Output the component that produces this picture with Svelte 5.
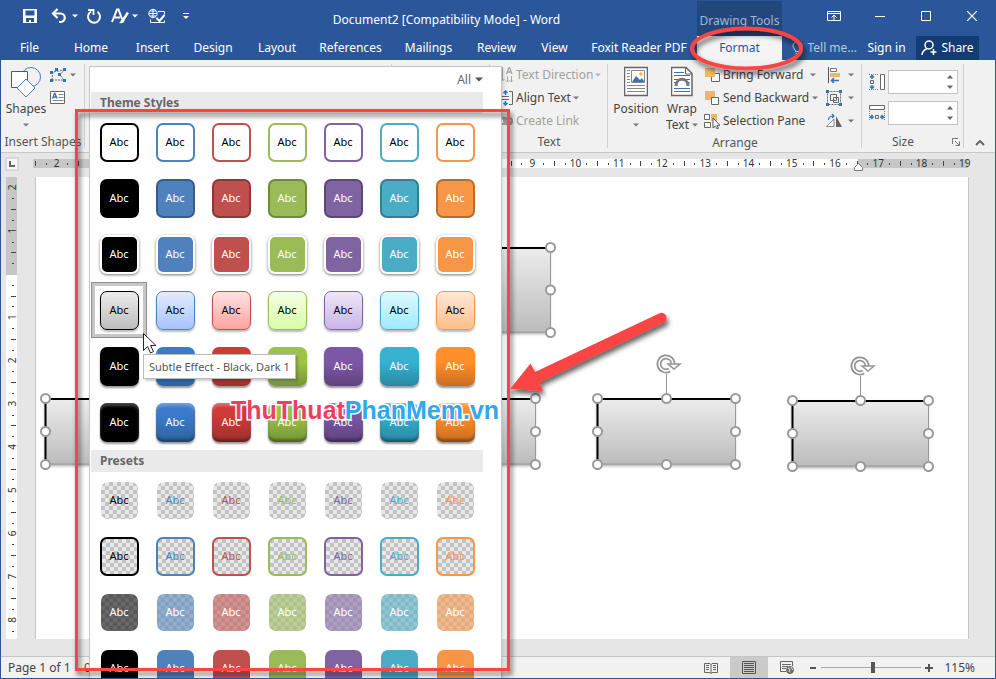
<script>
  const tabs = ['File', 'Home', 'Insert', 'Design', 'Layout', 'References', 'Mailings', 'Review', 'View', 'Foxit Reader PDF'];

  const accents = [
    { name: 'Black, Dark 1', c: '#000000', dark: '#000000', lo: '#bdbdbd', hi: '#ececec', g1: '#000000', g2: '#000000' },
    { name: 'Blue, Accent 1', c: '#4f81bd', dark: '#385d8a', lo: '#a6c4ff', hi: '#e2ecff', g1: '#3a7ccb', g2: '#2f629f' },
    { name: 'Red, Accent 2', c: '#c0504d', dark: '#8c3836', lo: '#ffa3a1', hi: '#ffe2e1', g1: '#cf3b38', g2: '#9e302d' },
    { name: 'Olive Green, Accent 3', c: '#9bbb59', dark: '#71893f', lo: '#d9fda6', hi: '#f4ffe2', g1: '#9bc348', g2: '#769535' },
    { name: 'Purple, Accent 4', c: '#8064a2', dark: '#5c4776', lo: '#c9b5e8', hi: '#efe6fb', g1: '#7d57a7', g2: '#5e437f' },
    { name: 'Aqua, Accent 5', c: '#4bacc6', dark: '#357d91', lo: '#9eeaff', hi: '#e0f9ff', g1: '#36b1d2', g2: '#2a87a1' },
    { name: 'Orange, Accent 6', c: '#f79646', dark: '#b66d31', lo: '#ffbe8a', hi: '#ffe8d8', g1: '#ff8f2b', g2: '#cb6d1e' }
  ];

  const sections = [
    { title: 'Theme Styles', rows: [
      { kind: 'outline', label: 'Colored Outline' },
      { kind: 'fill', label: 'Colored Fill' },
      { kind: 'light', label: 'Light Outline' },
      { kind: 'subtle', label: 'Subtle Effect' },
      { kind: 'moderate', label: 'Moderate Effect' },
      { kind: 'intense', label: 'Intense Effect' }
    ] },
    { title: 'Presets', rows: [
      { kind: 'clear', label: 'Transparent' },
      { kind: 'clear ring', label: 'Transparent, Colored Outline' },
      { kind: 'semi', label: 'Semitransparent' },
      { kind: 'solid', label: 'Colored Fill, No Outline' }
    ] }
  ];

  const unit = 43.25;
  const quarters = (from, to) => {
    const marks = [];
    for (let q = from * 4; q <= to * 4; q++) {
      if (q === 0) continue;
      const type = q % 4 === 0 ? 'number' : q % 2 === 0 ? 'tick' : 'dot';
      marks.push({ type, at: (q / 4) * unit, n: Math.abs(q / 4) });
    }
    return marks;
  };
  const across = quarters(-2.5, 19);
  const down = quarters(-2, 8.25);

  const shapes = [
    { x: 315, y: 70, w: 200, h: 85 },
    { x: 10, y: 221, w: 138, h: 66 },
    { x: 362, y: 221, w: 138, h: 66 },
    { x: 562, y: 221, w: 138, h: 66 },
    { x: 757, y: 223, w: 136, h: 66 }
  ];
  const handles = (s) => [
    [0, 0], [0.5, 0], [1, 0], [0, 0.5], [1, 0.5], [0, 1], [0.5, 1], [1, 1]
  ].map(([a, b]) => [s.x + a * s.w, s.y + b * s.h]);
</script>

{#snippet caret()}
  <svg class="caret" width="6" height="4" viewBox="0 0 6 4" aria-hidden="true"><path d="M0 0.5h6L3 3.5z" fill="currentColor" /></svg>
{/snippet}

<div class="app">
  <header>
    <div class="titlebar">
      <div class="quick">
        <button aria-label="Save"><svg width="16" height="16" viewBox="0 0 16 16"><path d="M1 1h14v14H1z" fill="#fff" /><path d="M3.500 2.500h9v5h-9zM4 10h8v4H9v-2H7v2H4z" fill="#2b579a" /></svg></button>
        <button aria-label="Undo"><svg width="16" height="16" viewBox="0 0 16 16"><path d="M2 5.500h7.500a4 4 0 0 1 0 8.500H8" fill="none" stroke="#fff" stroke-width="2.200" /><path d="M6.500 1 2 5.500 6.500 10" fill="none" stroke="#fff" stroke-width="2.200" /></svg></button>
        <button aria-label="Undo history">{@render caret()}</button>
        <button aria-label="Repeat"><svg width="16" height="16" viewBox="0 0 16 16"><path d="M5 3.500A6 6 0 1 0 11.500 3.800" fill="none" stroke="#fff" stroke-width="2" /><path d="M2 2h5.500v5" fill="none" stroke="#fff" stroke-width="1.800" /></svg></button>
        <button aria-label="Text effects"><svg width="18" height="16" viewBox="0 0 18 16"><path d="M1 14 6 1.500h1.500L11 11M3 9.500h6" fill="none" stroke="#fff" stroke-width="2" /><path d="M17 4.500 12 12" stroke="#fff" stroke-width="2.500" /><path d="M12.500 10.500c-3 0-2 3-4.500 4.500 3 1 6-.5 5.500-3.500z" fill="#fff" /></svg></button>
        <button aria-label="Text effects menu">{@render caret()}</button>
        <button aria-label="Spelling and language"><svg width="18" height="16" viewBox="0 0 18 16" fill="none" stroke="#fff"><circle cx="5" cy="5.500" r="4.200" /><path d="M5 1v9M1 5.500h8M2 3h6M2 8h6M10 3.500h6.500v3M2.500 11.500v3h14v-2" /><path d="m8.500 10 3 3L16.500 7" stroke-width="2" /></svg></button>
        <button aria-label="Customize Quick Access Toolbar"><svg width="8" height="8" viewBox="0 0 8 8"><path d="M1 1.500h6" stroke="#fff" /><path d="M1 4h6L4 7z" fill="#fff" /></svg></button>
      </div>
      <h1>Document2 [Compatibility Mode] - Word</h1>
      <div class="context">Drawing Tools</div>
      <div class="window">
        <button aria-label="Ribbon display options"><svg width="14" height="12" viewBox="0 0 14 12" fill="none" stroke="#fff"><path d="M.5 1.500h13v9H.5zM.5 3.500h13M7 10V5M4.500 7.500 7 5l2.500 2.500" /></svg></button>
        <button aria-label="Minimize"><svg width="10" height="10" viewBox="0 0 10 10"><path d="M0 5.500h10" stroke="#fff" /></svg></button>
        <button aria-label="Maximize"><svg width="10" height="10" viewBox="0 0 10 10"><path d="M.5.5h9v9h-9z" fill="none" stroke="#fff" /></svg></button>
        <button aria-label="Close"><svg width="10" height="10" viewBox="0 0 10 10"><path d="m0 0 10 10M10 0 0 10" stroke="#fff" stroke-width="1.200" /></svg></button>
      </div>
    </div>
    <nav class="tabs">
      {#each tabs as tab}<button>{tab}</button>{/each}
      <button class="active">Format</button>
      <button class="tell"><svg width="11" height="15" viewBox="0 0 11 15" fill="none" stroke="#c9d5e8"><path d="M3.500 10.500C3.500 8.500 1 7.500 1 5a4.500 4.500 0 0 1 9 0c0 2.500-2.500 3.500-2.500 5.500zM3.500 12.500h4M4 14.500h3" /></svg>Tell me...</button>
      <button class="sign">Sign in</button>
      <button class="share"><svg width="16" height="16" viewBox="0 0 16 16" fill="none" stroke="#fff" stroke-width="1.500"><circle cx="8" cy="5" r="4" /><path d="M1 15c0-3 2-5 5-6.500M12.500 9v6M9.500 12h6" /></svg>Share</button>
    </nav>
  </header>

  <section class="ribbon">
    <div class="group shapes-group">
      <div class="body">
        <button class="big"><svg width="32" height="32" viewBox="0 0 32 32" fill="#fff" stroke="#4a7ebb"><circle cx="21" cy="11" r="9.500" fill="#f1f1f1" /><path d="M1.500 5.500h16v16h-16z" stroke="#2f6099" /><path d="m16 13 9 9-9 9-9-9z" /></svg><span>Shapes</span>{@render caret()}</button>
        <div class="stack narrow">
          <button aria-label="Edit shape"><svg width="16" height="14" viewBox="0 0 16 14"><path d="M2 12 3 4l11-2-4 5 4 5z" fill="none" stroke="#666" stroke-dasharray="2 1" /><path d="M0 3h3v3H0zM5 0h3v3H5zM13 0h3v3h-3zM0 11h3v3H0zM8 5h3v3H8zM13 11h3v3h-3z" fill="#2f75b5" /></svg>{@render caret()}</button>
          <button aria-label="Draw text box"><svg width="16" height="14" viewBox="0 0 16 14"><path d="M.5.5h14v12H.5z" fill="#fff" stroke="#666" /><path d="m2.500 7.500 2-5h.500l2 5M3.500 6h3" fill="none" stroke="#2f75b5" stroke-width="1.300" /><path d="M8.500 3.500h5M8.500 6.500h5M2.500 9.500h11" stroke="#888" /></svg></button>
        </div>
      </div>
      <div class="label">Insert Shapes</div>
    </div>
    <div class="group styles-group"></div>
    <div class="group art-group"></div>
    <div class="group text-group">
      <div class="body stack">
        <button disabled><svg width="16" height="16" viewBox="0 0 16 16" fill="none" stroke="#a6a6a6"><path d="M4.500 0v14M2.500 12l2 2 2-2M9.500 9v6M8 13.500l1.500 1.500 1.500-1.500M13.500 9v6M12 13.500l1.500 1.500 1.500-1.500" /><path d="m8.500 7 2.500-6.500h.500L14 7M9.500 5h4" stroke-width="1.300" /></svg>Text Direction{@render caret()}</button>
        <button><svg width="16" height="16" viewBox="0 0 16 16" fill="none" stroke="#666"><path d="M11 1.500h3.500v13H11M4 6.500h7M4 9.500h7" /><path d="M7.500 5V1M5.500 3l2-2 2 2M7.500 11v4M5.500 13l2 2 2-2" stroke="#2f75b5" stroke-width="1.500" /></svg>Align Text{@render caret()}</button>
        <button disabled><svg width="16" height="16" viewBox="0 0 16 16" fill="none" stroke="#9c9c9c" stroke-width="2"><rect x="1" y="5" width="8" height="6" rx="3" /><rect x="6" y="5" width="8" height="6" rx="3" /><path d="m3 4 9 8M5 4l9 7" /></svg>Create Link</button>
      </div>
      <div class="label">Text</div>
    </div>
    <div class="group arrange-group">
      <div class="body">
        <button class="big position"><svg width="24" height="30" viewBox="0 0 24 30"><path d="M.5.5h23v28H.5z" fill="#fff" stroke="#666" stroke-width="1.500" /><path d="M3 3.500h3M3 6.500h3M3 9.500h3M3 12.500h3M3 15.500h3M3 18.500h18M3 21.500h18M3 24.500h18" stroke="#888" /><path d="M7.500 3.500h13v12h-13z" fill="#fff" stroke="#888" /><path d="m8 15 4-6 4 4 2-2 2.500 4z" fill="#3b73af" /><circle cx="17" cy="7" r="1.800" fill="#e9b85f" /></svg><span>Position</span>{@render caret()}</button>
        <button class="big wrap"><svg width="22" height="30" viewBox="0 0 22 30"><path d="M.5.5H15l6 6v22H.5z" fill="#fff" stroke="#666" stroke-width="1.500" /><path d="M14.500 1v6H21" fill="none" stroke="#666" /><path d="M3 5.500h10M3 8.500h16M3 12.500h4M15 12.500h4M3 15.500h2M17 15.500h2M3 21.500h16M3 24.500h16" stroke="#3b73af" /><path d="M5 19c0-9 12-9 12 0" fill="none" stroke="#777" stroke-width="3" /></svg><span>Wrap</span><span class="line">Text {@render caret()}</span></button>
        <div class="stack order">
          <button><svg width="16" height="16" viewBox="0 0 16 16"><path d="M7.500 6.500h8v8h-8z" fill="#fff" stroke="#666" /><path d="M1 1h10v9H1z" fill="#edb768" /></svg><span>Bring Forward</span>{@render caret()}</button>
          <button><svg width="16" height="16" viewBox="0 0 16 16"><path d="M1 1h10v9H1z" fill="#edb768" /><path d="M7.500 7.500h7v7h-7z" fill="#fff" stroke="#666" /></svg><span>Send Backward</span>{@render caret()}</button>
          <button><svg width="16" height="16" viewBox="0 0 16 16"><path d="M7 1h6v7H7z" fill="#edb768" /><path d="M.5 1.500h5v5h-5zM.5 9.500h6v5h-6z" fill="#fff" stroke="#666" /><path d="M9 5v10l2.500-2 1.500 3 1.500-.7-1.500-3h3z" fill="#fff" stroke="#555" /></svg><span>Selection Pane</span></button>
        </div>
        <div class="stack tools">
          <button aria-label="Align"><svg width="16" height="16" viewBox="0 0 16 16"><path d="M2.500 0v16" stroke="#555" /><path d="M4.500 1.500h6v3h-6z" fill="#fff" stroke="#777" /><path d="M4 6h10v4H4z" fill="#edb768" /><path d="M13 13.500H5M8 11l-2.500 2.500L8 16" fill="none" stroke="#2f75b5" stroke-width="1.500" /></svg>{@render caret()}</button>
          <button aria-label="Group"><svg width="16" height="16" viewBox="0 0 16 16" fill="none" stroke="#666"><path d="M1.500 1.500h13v13h-13z" stroke-dasharray="2 1" /><path d="M4.500 4.500h6v6h-6zM7.500 7.500h5v5h-5z" /><path d="M0 0h3v3H0zM13 0h3v3h-3zM0 13h3v3H0zM13 13h3v3h-3z" fill="#2f75b5" stroke="none" /></svg>{@render caret()}</button>
          <button aria-label="Rotate"><svg width="16" height="16" viewBox="0 0 16 16"><path d="M.5 13.500H8V6z" fill="#fff" stroke="#888" /><path d="M10 3v11h6z" fill="#666" /><path d="M2.500 7c0-3 2-4 5-4M6 1l2 2-2 2" fill="none" stroke="#2f75b5" stroke-width="1.200" /></svg>{@render caret()}</button>
        </div>
      </div>
      <div class="label">Arrange</div>
    </div>
    <div class="group size-group">
      <div class="body sizes">
        <label><svg width="18" height="18" viewBox="0 0 18 18"><path d="M1 1.500h10M1 16.500h10" stroke="#777" stroke-dasharray="1 1" /><path d="M12.500 1.500h4v15h-4z" fill="#fff" stroke="#666" /><path d="M4 6V2M2 4.500l2-2 2 2M4 12v4M2 13.500l2 2 2-2" fill="none" stroke="#2f75b5" stroke-width="1.500" /><path d="M2.500 7.500h3v3h-3z" fill="none" stroke="#666" /></svg><input type="text" aria-label="Shape height" /><svg class="spin" width="6" height="14" viewBox="0 0 6 14"><path d="M0 3.500h6L3 0zM0 10.500h6L3 14z" fill="#666" /></svg></label>
        <label><svg width="18" height="18" viewBox="0 0 18 18"><path d="M1.500 1.500h15v4h-15z" fill="#fff" stroke="#666" /><path d="M1.500 7v10M16.500 7v10" stroke="#777" stroke-dasharray="1 1" /><path d="M6 13H2M4.500 11l-2 2 2 2M12 13h4M13.500 11l2 2-2 2" fill="none" stroke="#2f75b5" stroke-width="1.500" /><path d="M7.500 11.500h3v3h-3z" fill="none" stroke="#666" /></svg><input type="text" aria-label="Shape width" /><svg class="spin" width="6" height="14" viewBox="0 0 6 14"><path d="M0 3.500h6L3 0zM0 10.500h6L3 14z" fill="#666" /></svg></label>
      </div>
      <div class="label launch"><span>Size</span><button aria-label="Size settings"><svg width="8" height="8" viewBox="0 0 8 8" fill="none" stroke="#777"><path d="M.5 6V.5H6M3 3l4 4M7.500 3.500v4h-4" /></svg></button></div>
    </div>
    <button class="collapse" aria-label="Collapse the ribbon"><svg width="10" height="6" viewBox="0 0 10 6"><path d="m1 5 4-4 4 4" fill="none" stroke="#666" stroke-width="2" /></svg></button>
  </section>

  <div class="ruler-row">
    <button class="tabstop" aria-label="Tab selector"><svg width="6" height="6" viewBox="0 0 6 6"><path d="M1 0v5h5" fill="none" stroke="#666" stroke-width="2" /></svg></button>
    <svg class="hruler" width="940" height="24" viewBox="33 153 940 24">
      <path d="M33 159h935v9H33z" fill="#c6c6c6" /><path d="M143 159h715v9H143z" fill="#fff" />
      {#each across as m}
        {#if m.type === 'number'}<text x={143 + m.at} y="167" text-anchor="middle">{m.n}</text>
        {:else if m.type === 'tick'}<path d="M{Math.round(143 + m.at)} 161h1v5h-1z" fill="#444" />
        {:else}<path d="M{Math.round(143 + m.at)} 163h1v2h-1z" fill="#444" />{/if}
      {/each}
      <path d="M854.500 170.500v-3l4-4 4 4v3z" fill="#fff" stroke="#777" />
    </svg>
  </div>

  <main>
    <svg class="vruler" width="11" height="462" viewBox="6 177 11 462">
      <path d="M6 177h11v462H6z" fill="#fff" /><path d="M6 177h11v98H6z" fill="#c6c6c6" />
      {#each down as m}
        {#if m.type === 'number'}<text transform="translate(16 {274 + m.at}) rotate(-90)" text-anchor="middle">{m.n}</text>
        {:else if m.type === 'tick'}<path d="M11 {Math.round(274 + m.at)}h5v1h-5z" fill="#444" />
        {:else}<path d="M12 {Math.round(274 + m.at)}h2v1h-2z" fill="#444" />{/if}
      {/each}
    </svg>
    <div class="page">
      <svg class="canvas" width="932" height="462" viewBox="1 0 932 462" role="img" aria-label="Selected drawing shapes">
        <defs>
          <linearGradient id="body" x2="0" y2="1"><stop offset="0" stop-color="#ededed" /><stop offset="1" stop-color="#bcbcbc" /></linearGradient>
          <filter id="soft" x="-10%" y="-10%" width="120%" height="130%"><feDropShadow dx="0" dy="2" stdDeviation="1.500" flood-opacity=".35" /></filter>
        </defs>
        {#each shapes as s}
          <rect x={s.x} y={s.y} width={s.w} height={s.h} fill="url(#body)" filter="url(#soft)" />
          <path d="M{s.x + s.w + 0.5} {s.y}v{s.h}H{s.x}" fill="none" stroke="#999" />
          <path d="M{s.x + 0.5} {s.y + s.h}V{s.y + 1}h{s.w}" fill="none" stroke="#000" stroke-width="2" />
          <g transform="translate({s.x + s.w / 2} {s.y - 34})" fill="none" stroke="#959595">
            <path d="M.5 10v24" />
            <path d="M7 0A7 7 0 1 0 3.500 6" stroke-width="5" />
            <path d="M7 0A7 7 0 1 0 3.500 6" stroke="#fff" stroke-width="1.500" />
            <path d="M2 0h12L8 5z" fill="#fff" stroke-width="1.500" />
          </g>
          {#each handles(s) as [x, y]}<circle cx={x + 0.5} cy={y + 0.5} r="4.500" fill="#fff" stroke="#999" stroke-width="2" />{/each}
        {/each}
      </svg>
    </div>
  </main>

  <footer>
    <span class="pages">Page 1 of 1</span>
    <span class="words">0 words</span>
    <button aria-label="Read mode"><svg width="14" height="12" viewBox="0 0 14 12" fill="none" stroke="#666"><path d="M.5 1.500H6l1 1 1-1h5.500v9H8l-1 1-1-1H.5zM7 2v10M2 3.500h3M2 5.500h3M2 7.500h3M9 3.500h3M9 5.500h3M9 7.500h3" /></svg></button>
    <button class="on" aria-label="Print layout"><svg width="14" height="13" viewBox="0 0 14 13" fill="none" stroke="#555"><path d="M.5.5h13v12H.5zM2 2.500h10M2 4.500h10M2 6.500h10M2 8.500h10M2 10.500h10" /></svg></button>
    <button aria-label="Web layout"><svg width="14" height="13" viewBox="0 0 14 13" fill="none" stroke="#666"><path d="M6 10.500H.5V.5h12V5M2 3.500h9M2 5.500h6M2 7.500h4" /><circle cx="10" cy="9" r="3.500" fill="#777" /><path d="m8 7 2 1-1 3M11 6l2 3" stroke="#ddd" /></svg></button>
    <button class="zoomer" aria-label="Zoom out"><svg width="8" height="8" viewBox="0 0 8 8"><path d="M1 4h6" stroke="#555" stroke-width="2" /></svg></button>
    <input type="range" min="0" max="100" value="52" aria-label="Zoom" />
    <button class="zoomer" aria-label="Zoom in"><svg width="8" height="8" viewBox="0 0 8 8"><path d="M0 4h8M4 0v8" stroke="#555" stroke-width="2" /></svg></button>
    <span class="percent">115%</span>
  </footer>

  <div class="gallery">
    <button class="all">All <svg width="8" height="5" viewBox="0 0 8 5" aria-hidden="true"><path d="M0 .5h8l-4 4z" fill="#555" /></svg></button>
    {#each sections as section, si}
      <h2>{section.title}</h2>
      <div class="grid">
        {#each section.rows as row, ri}
          {#each accents as a, ai}
            <button class="cell" class:selected={si === 0 && ri === 3 && ai === 0} aria-label="{row.label} - {a.name}">
              <span class="tile {row.kind}" style="--c:{a.c};--dark:{a.dark};--lo:{a.lo};--hi:{a.hi};--g1:{a.g1};--g2:{a.g2}">Abc</span>
            </button>
          {/each}
        {/each}
      </div>
    {/each}
  </div>

  <div class="tooltip" role="tooltip">Subtle Effect - Black, Dark 1</div>
  <svg class="overlay" width="996" height="679" viewBox="0 0 996 679" aria-hidden="true">
    <defs>
      <filter id="drop" x="-20%" y="-20%" width="140%" height="150%"><feDropShadow dx="2" dy="4" stdDeviation="2.500" flood-opacity=".6" /></filter>
    </defs>
    <path d="M143.500 333.500v17l4-4 3 6.500 3-1.500-3-6h5.500z" fill="#fff" stroke="#223" />
    <text class="mark" x="231" y="419"><tspan fill="#ec3f62">ThuThuat</tspan><tspan fill="#31a8ec">PhanMem.vn</tspan></text>
    <g filter="url(#drop)">
      <rect x="76.500" y="110.500" width="432" height="559" fill="none" stroke="#fb4444" stroke-width="3" />
      <ellipse cx="746.500" cy="48.500" rx="54.500" ry="20" fill="none" stroke="#fb4444" stroke-width="4" />
      <path d="m510 389 20.500-25.500 4.500 8.500 124-58.500a5 5 0 0 1 5 9l-124.500 60 3.500 8.500z" fill="#fb4444" />
    </g>
  </svg>
</div>

<style>
  :global(body) { margin: 0; }
  .app {
    position: relative;
    box-sizing: border-box;
    min-height: 100vh;
    display: flex;
    flex-direction: column;
    border: solid #2b579a;
    border-width: 0 1px 1px;
    background: #e6e6e6;
    color: #444;
    font: 12px/16px "Noto Sans", "Open Sans", sans-serif;
    overflow: hidden;
  }
  button { font: inherit; color: inherit; background: none; border: 0; padding: 0; margin: 0; white-space: nowrap; display: flex; align-items: center; justify-content: center; }
  svg { display: block; flex: none; }
  header { background: #2b579a; color: #fff; }
  .titlebar { display: flex; height: 36px; }
  .quick { display: grid; grid-template-columns: 34px 24px 7px 31px 22px 8px 36px 21px; padding: 0 0 4px 12px; }
  h1 { flex: 1; margin: 0; font-size: 12px; font-weight: 400; line-height: 40px; text-align: center; white-space: nowrap; }
  .context { width: 85px; margin-top: 1px; background: #22477d; color: #a3b6d4; line-height: 39px; text-align: center; }
  .window { display: flex; width: 213px; justify-content: flex-end; padding-bottom: 4px; box-sizing: border-box; }
  .window button { width: 46px; }
  .tabs { display: grid; height: 24px; grid-template-columns: 57px 66px 57px 64px 64px 83px 73px 63px 53px 1fr 85px 75px 59px 63px 16px; }
  .active { background: #f4f4f4; color: #2b579a; }
  .tell { color: #b8c7df; gap: 4px; justify-content: flex-end; }
  .share { background: #133c74; gap: 4px; }

  .ribbon { display: flex; height: 92px; background: #f1f1f1; border-bottom: 1px solid #c8c8c8; }
  .group { position: relative; display: flex; flex-direction: column; box-sizing: border-box; padding-top: 3px; flex: none; }
  .group::after { content: ""; position: absolute; right: 0; top: 4px; bottom: 4px; width: 1px; background: #d2d2d2; }
  .body { display: flex; height: 72px; }
  .label { line-height: 20px; text-align: center; color: #555; white-space: nowrap; }
  .shapes-group { width: 84px; }
  .styles-group { width: 307px; }
  .art-group { width: 98px; }
  .text-group { width: 118px; }
  .arrange-group { width: 254px; }
  .size-group { width: 102px; }
  .big { flex-direction: column; justify-content: flex-start; padding-top: 3px; width: 48px; }
  .big > svg:first-child { height: 32px; }
  .big span { margin-top: 3px; }
  .big .line { display: flex; align-items: center; gap: 3px; margin-top: 0; }
  .big > .caret { margin-top: 6px; }
  .caret { color: #777; }
  .quick .caret { color: #fff; }
  .stack { display: flex; flex-direction: column; }
  .stack button { height: 23px; justify-content: flex-start; gap: 4px; }
  .shapes-group .body { padding-left: 1px; }
  .text-group .body { padding-left: 8px; }
  .text-group .stack button { gap: 2px; }
  button:disabled { color: #a0a0a0; }
  button:disabled .caret { color: #b4b4b4; }
  .arrange-group .body { padding-left: 4px; }
  .wrap { width: 44px; }
  .order { width: 122px; }
  .order button { gap: 3px; }
  .order button:first-child span { margin-right: 4px; }
  .tools button { gap: 6px; }
  .sizes { flex-direction: column; gap: 7px; padding: 7px 0 0 6px; box-sizing: border-box; }
  .sizes label { display: flex; align-items: center; gap: 2px; position: relative; }
  .sizes input { width: 70px; height: 24px; box-sizing: border-box; border: 1px solid #c3c3c3; background: #fff; font: inherit; }
  .spin { position: absolute; right: 11px; }
  .launch { display: flex; justify-content: flex-end; gap: 38px; padding-right: 4px; }
  .collapse { align-self: flex-end; width: 32px; height: 18px; }

  .ruler-row { display: flex; height: 24px; overflow: hidden; }
  .tabstop { width: 14px; height: 14px; margin: 4px 14px 0 4px; background: #f8f8f8; border: 2px solid #d8d8d8; box-sizing: border-box; }
  .hruler text, .vruler text { font-size: 10px; fill: #333; }
  .vruler { overflow: visible; }
  main { flex: 1; display: flex; align-items: flex-start; padding: 0 26px 17px 5px; }
  .page { flex: 1; min-width: 0; margin-left: 18px; overflow: hidden; background: #fff; border: solid #c6c6c6; border-width: 0 1px; }
  footer { display: flex; align-items: center; height: 21px; background: #f1f1f1; border-top: 1px solid #c6c6c6; padding-right: 20px; }
  .pages { margin-left: 7px; width: 76px; white-space: nowrap; }
  .words { flex: 1; }
  footer button { width: 38px; height: 21px; }
  footer .on { background: #cacaca; }
  footer .zoomer { width: 14px; }
  input[type="range"] { appearance: none; width: 100px; height: 12px; margin: 0 1px; background: linear-gradient(#a6a6a6, #a6a6a6) center / 100% 1px no-repeat; }
  input[type="range"]::-webkit-slider-thumb { appearance: none; width: 4px; height: 11px; background: #555; }
  .percent { width: 39px; text-align: right; }

  .gallery { position: absolute; left: 88px; top: 66px; bottom: -1px; width: 413px; box-sizing: border-box; overflow: hidden; background: #fff; border: 1px solid #c6c6c6; border-bottom: 0; padding: 0 18px 0 1px; box-shadow: 2px 2px 3px #0002; }
  .all { margin-left: auto; height: 25px; gap: 4px; color: #666; }
  .gallery h2 { margin: 0; height: 22px; background: #eaeaea; padding-left: 9px; font-size: 12px; line-height: 22px; color: #666; }
  .grid { display: grid; grid-template-columns: repeat(7, 56px); grid-auto-rows: 56px; }
  .cell.selected { border: 1px solid #8f8f8f; box-shadow: inset 0 0 0 3px #c6c6c6; }
  .tile { width: 39px; height: 39px; box-sizing: border-box; border-radius: 7px; display: flex; align-items: center; justify-content: center; font-size: 11px; color: #fff; background: var(--c); }
  .outline { background: #fff; color: #000; border: 2px solid var(--c); }
  .fill { border: 2px solid var(--dark); }
  .light { border: 2px solid #fff; box-shadow: 0 1px 3px #0008; }
  .subtle { background: linear-gradient(var(--hi), var(--lo)); color: #000; border: 1px solid var(--c); box-shadow: 0 2px 2px #0004; }
  .moderate { background: linear-gradient(var(--g1) 40%, var(--g2)); box-shadow: 0 2px 2px #0006; }
  .intense { background: linear-gradient(var(--g1) 30%, var(--g2)); box-shadow: 0 2px 2px #0006, inset 0 3px 3px #fff4, inset 0 -3px 3px #0005; }
  .clear, .semi { width: 37px; height: 37px; color: var(--c); background: conic-gradient(#e9e9e9 25%, #c3c3c3 0 50%, #e9e9e9 0 75%, #c3c3c3 0) 0 0 / 8px 8px; }
  .ring { width: 39px; height: 39px; border: 2px solid var(--c); }
  .semi { color: #fff; background: linear-gradient(color-mix(in srgb, var(--c) 55%, transparent), color-mix(in srgb, var(--c) 55%, transparent)), conic-gradient(#e6e6e6 25%, #c6c6c6 0 50%, #e6e6e6 0 75%, #c6c6c6 0) 0 0 / 8px 8px; }
  .solid { width: 37px; height: 37px; }

  .tooltip { position: absolute; left: 142px; top: 354px; padding: 3px 5px; background: #fff; border: 1px solid #bbb; color: #555; font-size: 11px; line-height: 17px; white-space: nowrap; box-shadow: 2px 2px 2px #0003; }
  .overlay { position: absolute; left: -1px; top: 0; pointer-events: none; }
  .mark { font: bold 25px "Liberation Sans Narrow", "Liberation Sans", sans-serif; stroke: #fff; stroke-width: 3px; paint-order: stroke; }
</style>
